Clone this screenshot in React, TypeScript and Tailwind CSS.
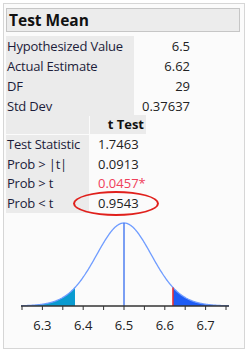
import React from "react";

const top = [
  ["Hypothesized Value", "6.5"],
  ["Actual Estimate", "6.62"],
  ["DF", "29"],
  ["Std Dev", "0.37637"],
];

const ttest: [string, string, boolean][] = [
  ["Test Statistic", "1.7463", false],
  ["Prob > |t|", "0.0913", false],
  ["Prob > t", "0.0457*", true],
  ["Prob < t", "0.9543", false],
];

// t density, df 29, drawn in page coordinates
const CX = 124;
const SX = 408; // px per unit
const SE = 0.37637 / Math.sqrt(30);
const BASE = 307;
const PEAK = 224;
const dens = (x: number) => {
  const t = (x - CX) / (SE * SX);
  return Math.pow(1 + (t * t) / 29, -15);
};
const yAt = (x: number) => BASE - (BASE - PEAK) * dens(x);

function pts(a: number, b: number) {
  const out: string[] = [];
  for (let x = a; x <= b + 0.001; x += 0.5) out.push(`${x.toFixed(1)},${yAt(x).toFixed(2)}`);
  return out;
}

const tcut = 1.7463 * SE * SX;
const L = 21;
const R = 229;
const curve = pts(L, R).join(" ");
const leftFill = [`${L},${BASE}`, ...pts(L, CX - tcut), `${(CX - tcut).toFixed(1)},${BASE}`].join(" ");
const rightFill = [`${(CX + tcut).toFixed(1)},${BASE}`, ...pts(CX + tcut, R), `${R},${BASE}`].join(" ");

const ticks = Array.from({ length: 11 }, (_, i) => 6.25 + i * 0.05);

export default function App() {
  return (
    <div
      className="w-[252px] h-[357px] bg-white pt-[3px] pl-[3px] pr-[7px] text-[13px] text-[#1c1c3a]"
      style={{ fontFamily: '"Open Sans", "Noto Sans", sans-serif' }}
    >
      <div className="relative h-[346px] border border-[#d6d6d6] bg-[#fbfbfb] pl-[2px] pr-[4px] pt-[4px]">
        <div className="h-[24px] border border-[#c6c6c6] bg-[#ececec] pl-[2px] text-[15.5px] font-bold leading-[22px] text-[#111]">
          Test Mean
        </div>

        <div className="mt-[4px]">
          {top.map(([k, v]) => (
            <div key={k} className="flex h-[20px] items-center">
              <div className="w-[128px] h-full bg-[#ebebeb] pl-[1px] leading-[20px] tracking-[-0.2px]">{k}</div>
              <div className="w-[56px] text-right leading-[20px] text-[#222]">{v}</div>
            </div>
          ))}
        </div>

        <div className="flex h-[19px] mt-[-1px]">
          <div className="w-[83px] bg-[#ebebeb]" />
          <div className="w-[1px]" />
          <div className="w-[56px] bg-[#ebebeb] pr-[2px] text-right font-bold leading-[19px] text-[#111]">
            t Test
          </div>
        </div>

        <div className="mt-[1px]">
          {ttest.map(([k, v, red]) => (
            <div key={k} className="flex h-[19.5px] items-center">
              <div className="w-[83px] h-full bg-[#ebebeb] pl-[1px] leading-[19.5px] tracking-[-0.2px] whitespace-pre">{k}</div>
              <div className={`pl-[9px] leading-[19.5px] ${red ? "text-[#f0405a]" : "text-[#222]"}`}>{v}</div>
            </div>
          ))}
        </div>

        <div className="absolute left-[69px] top-[187px] w-[86px] h-[25px] rounded-[50%] border-2 border-[#e0201c]" />

        <svg width="238" height="128" viewBox="4 215 238 128" className="block mt-[1px] ml-[-2px]">
          <polygon points={leftFill} fill="#0a9bd0" />
          <polygon points={rightFill} fill="#1e5cf5" />
          <polyline points={curve} fill="none" stroke="#6f9cff" strokeWidth="1.3" />
          <line x1={CX} y1={PEAK} x2={CX} y2={BASE} stroke="#4f7ff0" strokeWidth="1.5" />
          <line x1={CX + tcut} y1={yAt(CX + tcut)} x2={CX + tcut} y2={BASE} stroke="#f02a2a" strokeWidth="1.5" />
          <line x1={L} y1={BASE} x2={R} y2={BASE} stroke="#333" strokeWidth="1.6" />
          {ticks.map((t) => {
            const x = CX + (t - 6.5) * SX;
            return <line key={t} x1={x} y1={BASE} x2={x} y2={BASE + 4} stroke="#333" strokeWidth="1" />;
          })}
          {[6.3, 6.4, 6.5, 6.6, 6.7].map((t) => (
            <text
              key={t}
              x={CX + (t - 6.5) * SX}
              y={331}
              textAnchor="middle"
              fontSize="13"
              fill="#222"
              fontFamily='"Open Sans", sans-serif'
            >
              {t.toFixed(1)}
            </text>
          ))}
        </svg>
      </div>
    </div>
  );
}
